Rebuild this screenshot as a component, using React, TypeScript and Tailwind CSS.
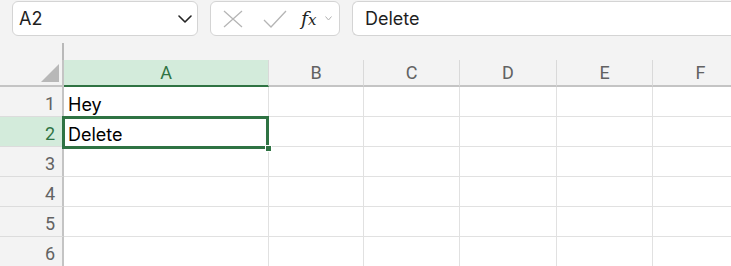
import React from 'react';

const COLS = [
  { key: 'A', w: 'w-[205px]' },
  { key: 'B', w: 'w-[95px]' },
  { key: 'C', w: 'w-[96px]' },
  { key: 'D', w: 'w-[97px]' },
  { key: 'E', w: 'w-[96px]' },
  { key: 'F', w: 'w-[96px]' },
];

const DATA: Record<number, string> = { 1: 'Hey', 2: 'Delete' };

const FormulaBar: React.FC = () => (
  <div className="flex h-[37px] items-start gap-3 pl-3 pt-px">
    {/* Name box */}
    <div className="flex h-[35px] w-[186px] shrink-0 items-center justify-between rounded-md border border-[#d4d4d4] bg-white pl-[6px] pr-[4px]">
      <span className="text-[18px] text-[#1f1f1f]">A2</span>
      <svg width="14" height="8" viewBox="0 0 14 8" className="mr-[1px]">
        <path d="M1 1 L7 7 L13 1" fill="none" stroke="#242424" strokeWidth="1.6" strokeLinecap="round" strokeLinejoin="round" />
      </svg>
    </div>

    {/* Cancel / enter / fx */}
    <div className="flex h-[35px] w-[130px] shrink-0 items-center rounded-md border border-[#d4d4d4] bg-white pl-[12px]">
      <svg width="20" height="18" viewBox="0 0 20 18">
        <path d="M1 1 L19 17 M19 1 L1 17" fill="none" stroke="#b5b5b5" strokeWidth="1.3" />
      </svg>
      <svg width="24" height="18" viewBox="0 0 24 18" className="ml-[20px]">
        <path d="M1 10 L8 17 L23 1" fill="none" stroke="#b5b5b5" strokeWidth="1.3" />
      </svg>
      <span className="ml-[14px] font-['DejaVu_Serif'] text-[19px] italic leading-none text-[#222]">
        f<span className="text-[15px]">x</span>
      </span>
      <svg width="7" height="5" viewBox="0 0 7 5" className="ml-[8px]">
        <path d="M0.5 0.5 L3.5 4 L6.5 0.5" fill="none" stroke="#b0b0b0" strokeWidth="1" />
      </svg>
    </div>

    {/* Formula input */}
    <div className="flex h-[35px] flex-1 items-center rounded-l-md border border-r-0 border-[#d4d4d4] bg-white pl-[12px]">
      <span className="text-[18px] text-[#1f1f1f]">Delete</span>
    </div>
  </div>
);

const App: React.FC = () => {
  return (
    <div className="relative h-[266px] w-[731px] overflow-hidden bg-[#f3f3f3] font-['Inter',sans-serif]">
      <FormulaBar />

      {/* splitter gap */}
      <div className="h-[23px] pt-[6px]">
        <div className="ml-[62px] h-[17px] w-[2px] bg-[#b9b9b9]" />
      </div>

      {/* Column headers */}
      <div className="flex h-[27px] font-['Roboto',sans-serif] text-[18px]">
        <div className="relative w-[64px] shrink-0 border-b-2 border-r-2 border-[#c4c4c4]">
          <svg width="18" height="18" viewBox="0 0 18 18" className="absolute left-[41px] top-[4px]">
            <path d="M18 0 L18 18 L0 18 Z" fill="#b8b8b8" />
          </svg>
        </div>
        {COLS.map((c) =>
          c.key === 'A' ? (
            <div
              key={c.key}
              className={`${c.w} flex shrink-0 items-center justify-center border-b-2 border-r border-b-[#2f7343] border-r-[#d9d9d9] bg-[#d3ebdb] text-[#2f7343]`}
            >
              {c.key}
            </div>
          ) : (
            <div
              key={c.key}
              className={`${c.w} flex shrink-0 items-center justify-center border-b-2 border-r border-b-[#c4c4c4] border-r-[#d9d9d9] text-[#626262]`}
            >
              {c.key}
            </div>
          )
        )}
      </div>

      {/* Rows */}
      <div className="relative">
        {[1, 2, 3, 4, 5, 6].map((r) => (
          <div key={r} className="flex h-[30px]">
            <div
              className={`flex w-[64px] shrink-0 items-center justify-end border-b border-r-2 border-b-[#dcdcdc] border-r-[#c4c4c4] pr-[7px] pt-[3px] font-['Roboto',sans-serif] text-[18px] ${
                r === 2 ? 'bg-[#d3ebdb] text-[#2f7343]' : 'text-[#626262]'
              }`}
            >
              {r}
            </div>
            {COLS.map((c) => (
              <div
                key={c.key}
                className={`${c.w} flex shrink-0 items-center border-b border-r border-[#e1e1e1] bg-white pl-[4px] pt-[5px] text-[18px] text-black`}
              >
                {c.key === 'A' ? DATA[r] ?? '' : ''}
              </div>
            ))}
          </div>
        ))}

        {/* Active cell A2 */}
        <div className="pointer-events-none absolute left-[62px] top-[29px] h-[33px] w-[207px] border-[3px] border-[#2f7343]" />
        <div className="pointer-events-none absolute left-[265px] top-[58px] h-[7px] w-[7px] border border-white bg-[#2f7343]" />
      </div>
    </div>
  );
};

export default App;
